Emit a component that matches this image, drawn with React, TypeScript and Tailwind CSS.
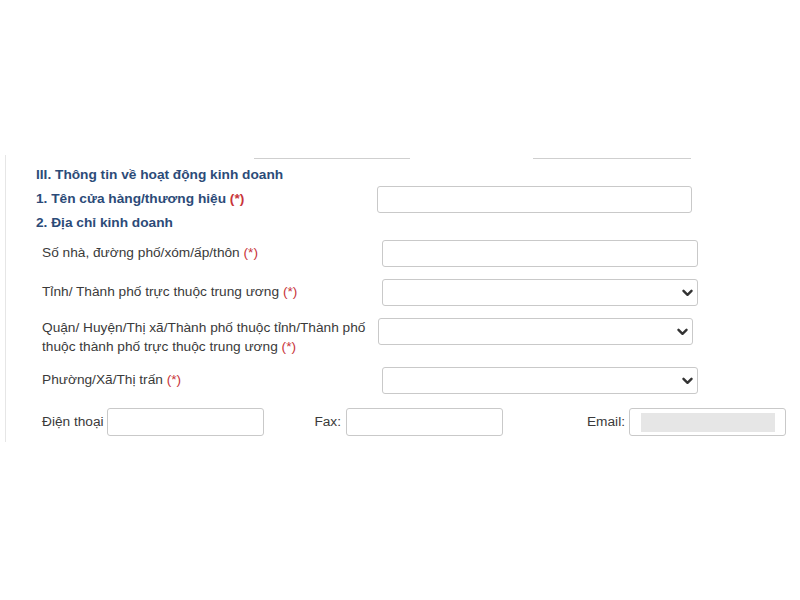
import React from "react";

function Req() {
  return <span className="text-[#c8343a]">(*)</span>;
}

function TextBox({ className = "" }: { className?: string }) {
  return (
    <div
      className={`h-[27px] rounded-[3px] border border-[#c9c9c9] bg-white ${className}`}
    />
  );
}

function SelectBox({ className = "" }: { className?: string }) {
  return (
    <div
      className={`flex h-[27px] items-center justify-end rounded-[3px] border border-[#c9c9c9] bg-white pr-[4px] ${className}`}
    >
      <svg width="11" height="8" viewBox="0 0 11 8" fill="none">
        <path
          d="M1.5 1.8 L5.5 5.8 L9.5 1.8"
          stroke="#333"
          strokeWidth="2.4"
          strokeLinecap="round"
          strokeLinejoin="round"
        />
      </svg>
    </div>
  );
}

export default function App() {
  return (
    <div
      className="h-[600px] w-[800px] bg-white pt-[155px] text-[13.7px] text-[#3a3a3a]"
      style={{ fontFamily: '"Liberation Sans", Arial, sans-serif' }}
    >
      <div className="ml-[5px] h-[287px] border-l border-[#e6e6e6]">
        <div className="flex pt-[3px]">
          <div className="ml-[248px] h-px w-[156px] bg-[#cfcfcf]" />
          <div className="ml-[123px] h-px w-[158px] bg-[#cfcfcf]" />
        </div>

        <div className="ml-[30px] mt-[6px] flex h-[20px] items-center font-bold text-[#2c4b78]">
          III. Thông tin về hoạt động kinh doanh
        </div>

        <div className="mt-[1px] flex h-[27px] items-center">
          <div className="ml-[30px] w-[341px] font-bold text-[#2c4b78]">
            1. Tên cửa hàng/thương hiệu <Req />
          </div>
          <TextBox className="w-[315px]" />
        </div>

        <div className="ml-[30px] flex h-[20px] items-center font-bold text-[#2c4b78]">
          2. Địa chỉ kinh doanh
        </div>

        <div className="mt-[7px] flex h-[27px] items-center">
          <div className="ml-[36px] w-[340px]">
            Số nhà, đường phố/xóm/ấp/thôn <Req />
          </div>
          <TextBox className="w-[316px]" />
        </div>

        <div className="mt-[12px] flex h-[27px] items-center">
          <div className="ml-[36px] w-[340px]">
            Tỉnh/ Thành phố trực thuộc trung ương <Req />
          </div>
          <SelectBox className="w-[316px]" />
        </div>

        <div className="mt-[12px] flex items-start">
          <div className="ml-[36px] w-[336px] leading-[19px]">
            Quận/ Huyện/Thị xã/Thành phố thuộc tỉnh/Thành phố
            <br />
            thuộc thành phố trực thuộc trung ương <Req />
          </div>
          <SelectBox className="w-[315px]" />
        </div>

        <div className="mt-[11px] flex h-[27px] items-center">
          <div className="ml-[36px] w-[340px]">
            Phường/Xã/Thị trấn <Req />
          </div>
          <SelectBox className="w-[316px]" />
        </div>

        <div className="mt-[14px] flex h-[28px] items-center">
          <div className="ml-[36px] w-[64px]">Điện thoại</div>
          <TextBox className="ml-[1px] h-[28px] w-[157px]" />
          <div className="w-[82px] pr-[5px] text-right">Fax:</div>
          <TextBox className="h-[28px] w-[157px]" />
          <div className="w-[126px] pr-[4px] text-right">Email:</div>
          <div className="flex h-[28px] w-[157px] items-center rounded-[3px] border border-[#c9c9c9] bg-white pl-[11px]">
            <div className="h-[19px] w-[134px] bg-[#e6e6e6]" />
          </div>
        </div>
      </div>
    </div>
  );
}
